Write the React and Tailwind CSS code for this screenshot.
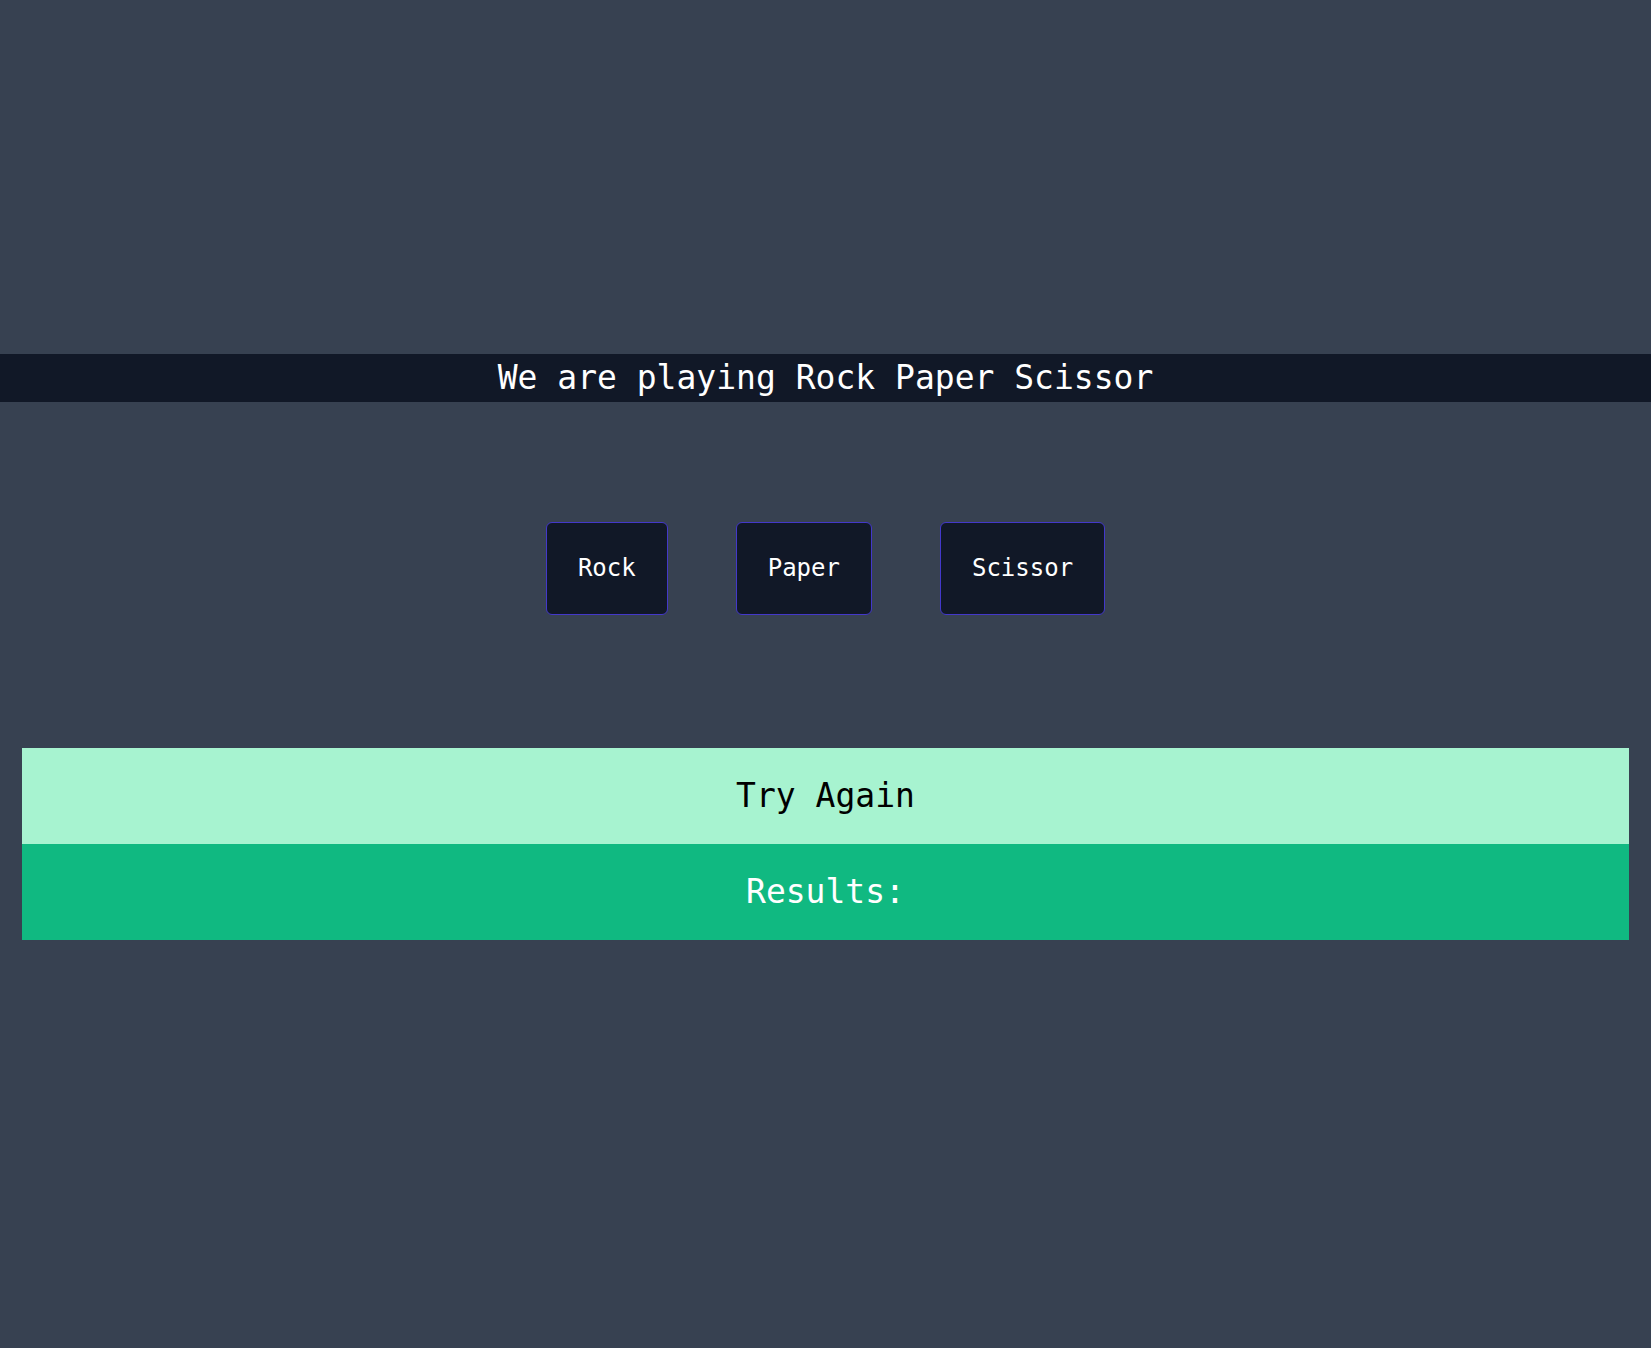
const CHOICES = ['Rock', 'Paper', 'Scissor']

export default function App() {
  return (
    <div
      className="min-h-screen bg-[#374151] pt-[354px]"
      style={{ fontFamily: '"DejaVu Sans Mono", "Liberation Mono", monospace' }}
    >
      {/* title bar */}
      <div className="bg-[#111827] h-[48px] flex items-center justify-center">
        <h1 className="text-white text-[33px] leading-[48px]">We are playing Rock Paper Scissor</h1>
      </div>

      {/* choices */}
      <div className="flex justify-center gap-[68px] mt-[120px]">
        {CHOICES.map((c) => (
          <button
            key={c}
            type="button"
            className="bg-[#111827] text-white text-[24px] leading-[33px] px-[31px] py-[29px] border border-[#4338ca] rounded-md"
          >
            {c}
          </button>
        ))}
      </div>

      {/* result area */}
      <div className="mx-[22px] mt-[133px]">
        <div className="bg-[#a7f3d0] h-[96px] flex items-center justify-center text-black text-[33px]">
          Try Again
        </div>
        <div className="bg-[#10b981] h-[96px] flex items-center justify-center text-white text-[33px]">
          Results:
        </div>
      </div>
    </div>
  )
}
